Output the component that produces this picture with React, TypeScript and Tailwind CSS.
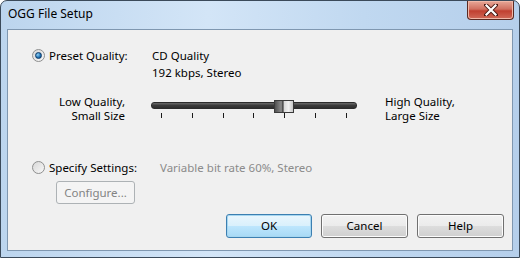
import React from "react";

const font = { fontFamily: '"Noto Sans", "Open Sans", sans-serif' };

const Radio = ({ checked }: { checked?: boolean }) => (
  <span className="relative flex h-[13px] w-[13px] shrink-0 items-center justify-center rounded-full border border-[#8e8f8f] bg-gradient-to-br from-[#d8d8d8] to-[#f8f8f8]">
    {checked && (
      <span className="h-[7px] w-[7px] rounded-full border border-[#0f3a66] bg-[radial-gradient(circle_at_35%_35%,#8fd0f5,#1c6eb0_60%,#0d3f77)]" />
    )}
  </span>
);

const Button = ({
  children,
  primary,
  disabled,
  className = "",
}: {
  children: React.ReactNode;
  primary?: boolean;
  disabled?: boolean;
  className?: string;
}) => (
  <div
    className={
      "flex items-center justify-center rounded-[3px] border text-[11.5px] " +
      (disabled
        ? "border-[#adb2b5] bg-[#f4f4f4] text-[#838383] "
        : primary
          ? "border-[#3c7fb1] bg-[linear-gradient(#eaf6fd,#d9f0fc_50%,#bee6fd_50%,#a7d9f5)] text-black shadow-[inset_0_0_0_1px_#a6d6f0] "
          : "border-[#707070] bg-[linear-gradient(#f2f2f2,#ebebeb_50%,#dddddd_50%,#cfcfcf)] text-black shadow-[inset_0_0_0_1px_#fcfcfc] ") +
      className
    }
  >
    {children}
  </div>
);

const ticks = [160, 191, 222, 252, 283, 314, 345];

const Slider = () => (
  <div className="relative h-[28px] w-[206px]">
    <div className="absolute left-0 right-0 top-[7px] h-[7px] rounded-[3px] border border-[#2c2c2c] bg-[linear-gradient(#6a6a6a,#3a3a3a_50%,#2e2e2e)]" />
    <div className="absolute left-[123px] top-[5px] flex h-[13px] w-[20px] overflow-hidden border border-[#3a3a3a] bg-[linear-gradient(90deg,#505050,#8a8a8a_35%,#333_45%,#d8d8d8_50%,#f0f0f0_75%,#c8c8c8)]" />
    {ticks.map((t) => (
      <div
        key={t}
        className="absolute top-[18px] h-[5px] w-[1px] bg-[#1a1a1a]"
        style={{ left: t - 150 }}
      />
    ))}
  </div>
);

export default function App() {
  return (
    <div
      style={font}
      className="flex h-[258px] w-[520px] flex-col overflow-hidden rounded-t-[7px] border border-[#3b4a5a] bg-[linear-gradient(90deg,#bcd5ee,#d3e5f7_40%,#c0d8f0_70%,#b5cfeb)] text-[11.5px] text-black"
    >
      <div className="flex h-[28px] shrink-0 items-start justify-between">
        <div className="pl-[7px] pt-[5px] text-[12px] leading-[16px] text-black">OGG File Setup</div>
        <div className="mr-[5px] flex h-[19px] w-[47px] items-center justify-center rounded-b-[4px] border border-t-0 border-[#5a2a22] bg-[linear-gradient(#e8a898,#d07060_45%,#c04030_55%,#d06a58)] shadow-[inset_0_0_0_1px_#f0b8a8]">
          <svg width="14" height="12" viewBox="0 0 14 12">
            <path d="M2 1 L12 11 M12 1 L2 11" stroke="#4a1a14" strokeWidth="4" strokeLinecap="square" />
            <path d="M2.5 1.5 L11.5 10.5 M11.5 1.5 L2.5 10.5" stroke="#ffffff" strokeWidth="2.2" strokeLinecap="square" />
          </svg>
        </div>
      </div>

      <div className="mx-[6px] mb-[6px] flex flex-1 flex-col border border-[#7f97b0] bg-[#f0f0f0] pl-[24px] pr-[8px] pt-[17px]">
        <div className="flex">
          <div className="flex h-[17px] w-[120px] items-center gap-[4px]">
            <Radio checked />
            <span className="leading-[17px]">Preset Quality:</span>
          </div>
          <div className="leading-[17px]">
            <div>CD Quality</div>
            <div>192 kbps, Stereo</div>
          </div>
        </div>

        <div className="mt-[14px] flex items-start">
          <div className="w-[93px] text-right leading-[14px]">
            <div>Low Quality,</div>
            <div>Small Size</div>
          </div>
          <div className="ml-[26px]">
            <Slider />
          </div>
          <div className="ml-[28px] leading-[14px]">
            <div>High Quality,</div>
            <div>Large Size</div>
          </div>
        </div>

        <div className="mt-[36px] flex h-[17px] items-center">
          <div className="flex w-[128px] items-center gap-[4px]">
            <Radio />
            <span className="leading-[17px]">Specify Settings:</span>
          </div>
          <span className="text-[#8b8b8b]">Variable bit rate 60%, Stereo</span>
        </div>

        <Button disabled className="ml-[24px] mt-[5px] h-[23px] w-[79px]">
          Configure...
        </Button>

        <div className="mt-[10px] flex justify-end gap-[9px]">
          <Button primary className="h-[24px] w-[86px]">OK</Button>
          <Button className="h-[24px] w-[87px]">Cancel</Button>
          <Button className="h-[24px] w-[87px]">Help</Button>
        </div>
      </div>
    </div>
  );
}
